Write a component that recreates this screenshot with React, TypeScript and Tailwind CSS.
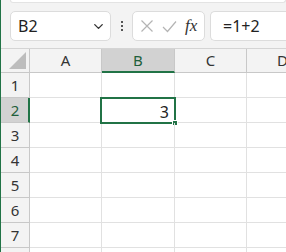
import { ChevronDown } from "lucide-react";

const cols = [
    { label: "A", w: "w-[72px]" },
    { label: "B", w: "w-[73px]" },
    { label: "C", w: "w-[72px]" },
    { label: "D", w: "w-[72px]" },
];

const rows = [1, 2, 3, 4, 5, 6, 7, 8];

function Toolbar() {
    return (
        <div className="h-[48px] shrink-0 bg-[#f3f3f3]">
            {/* bottom edge of the ribbon panel */}
            <div className="ml-[9px] h-[3px] rounded-b-[5px] border-x border-b border-[#e3e3e3] bg-white" />

            <div className="mt-[8px] flex h-[30px] items-stretch">
                {/* Name box */}
                <div className="ml-[9px] flex w-[101px] items-center justify-between rounded-[5px] border border-[#dcdcdc] bg-white pl-[7px] pr-[4px]">
                    <span className="text-[16px] text-[#222]">B2</span>
                    <ChevronDown size={15} strokeWidth={2.2} className="text-[#333]" />
                </div>

                {/* vertical ellipsis */}
                <div className="flex w-[21px] flex-col items-center justify-center gap-[2px]">
                    <span className="h-[2px] w-[2px] bg-[#555]" />
                    <span className="h-[2px] w-[2px] bg-[#555]" />
                    <span className="h-[2px] w-[2px] bg-[#555]" />
                </div>

                {/* cancel / enter / fx */}
                <div className="flex w-[73px] items-center rounded-[5px] border border-[#dcdcdc] bg-white pl-[6px]">
                    <svg width="14" height="14" viewBox="0 0 14 14" className="ml-[1px]">
                        <path d="M1.5 1.5 L12.5 12.5 M12.5 1.5 L1.5 12.5" stroke="#b4b4b4" strokeWidth="1.2" fill="none" />
                    </svg>
                    <svg width="15" height="13" viewBox="0 0 15 13" className="ml-[8px]">
                        <path d="M1 7 L5.5 11.5 L14 1.5" stroke="#b4b4b4" strokeWidth="1.2" fill="none" />
                    </svg>
                    <span className="ml-[8px] font-['Liberation_Serif',serif] text-[17px] italic text-[#333]">
                        fx
                    </span>
                </div>

                {/* Formula bar */}
                <div className="ml-[5px] flex flex-1 items-center rounded-l-[5px] border border-r-0 border-[#dcdcdc] bg-white pl-[12px]">
                    <span className="text-[16px] text-[#222]">=1+2</span>
                </div>
            </div>
        </div>
    );
}

function HeaderRow() {
    return (
        <div className="flex h-[25px] shrink-0 border-t border-[#d4d4d4] bg-[#f3f3f3]">
            <div className="relative w-[29px] shrink-0 border-r border-b border-[#c8c8c8]">
                <svg width="17" height="17" viewBox="0 0 17 17" className="absolute right-[3px] bottom-[3px]">
                    <polygon points="17,0 17,17 0,17" fill="#bdbdbd" />
                </svg>
            </div>
            {cols.map((c) =>
                c.label === "B" ? (
                    <div
                        key={c.label}
                        className={`${c.w} flex shrink-0 items-center justify-center border-r border-b-2 border-r-[#c8c8c8] border-b-[#217346] bg-[#d2d2d2] pt-[1px] text-[15px] text-[#1f5f3b]`}
                    >
                        {c.label}
                    </div>
                ) : (
                    <div
                        key={c.label}
                        className={`${c.w} flex shrink-0 items-center justify-center border-r border-b border-[#c8c8c8] text-[15px] text-[#333]`}
                    >
                        {c.label}
                    </div>
                )
            )}
        </div>
    );
}

function GridRow({ n }: { n: number }) {
    const selected = n === 2;
    return (
        <div className="flex h-[25px] shrink-0">
            <div
                className={
                    selected
                        ? "flex w-[29px] shrink-0 items-center justify-center border-r-2 border-b border-r-[#217346] border-b-[#c8c8c8] bg-[#d2d2d2] pl-[1px] text-[15px] text-[#1f5f3b]"
                        : "flex w-[29px] shrink-0 items-center justify-center border-r border-b border-[#c8c8c8] bg-[#f3f3f3] text-[15px] text-[#333]"
                }
            >
                {n < 8 ? n : ""}
            </div>
            <div className="w-[72px] shrink-0 border-r border-b border-[#e1e1e1]" />
            <div className="relative w-[73px] shrink-0 border-r border-b border-[#e1e1e1]">
                {selected && (
                    <>
                        <div className="absolute -top-[1px] -left-[2px] right-[-2px] bottom-[-2px] border-2 border-[#217346]" />
                        <span className="absolute right-[5px] top-[2px] text-[16px] text-[#222]">3</span>
                        <div className="absolute right-[-4px] bottom-[-4px] h-[6px] w-[6px] border border-white bg-[#217346]" />
                    </>
                )}
            </div>
            <div className="w-[72px] shrink-0 border-r border-b border-[#e1e1e1]" />
            <div className="w-[72px] shrink-0 border-b border-[#e1e1e1]" />
        </div>
    );
}

export default function App() {
    return (
        <div className="flex h-[252px] w-[286px] flex-col overflow-hidden border-l border-[#217346] bg-white font-['Noto_Sans','Liberation_Sans',sans-serif]">
            <Toolbar />
            <HeaderRow />
            {rows.map((n) => (
                <GridRow key={n} n={n} />
            ))}
        </div>
    );
}
